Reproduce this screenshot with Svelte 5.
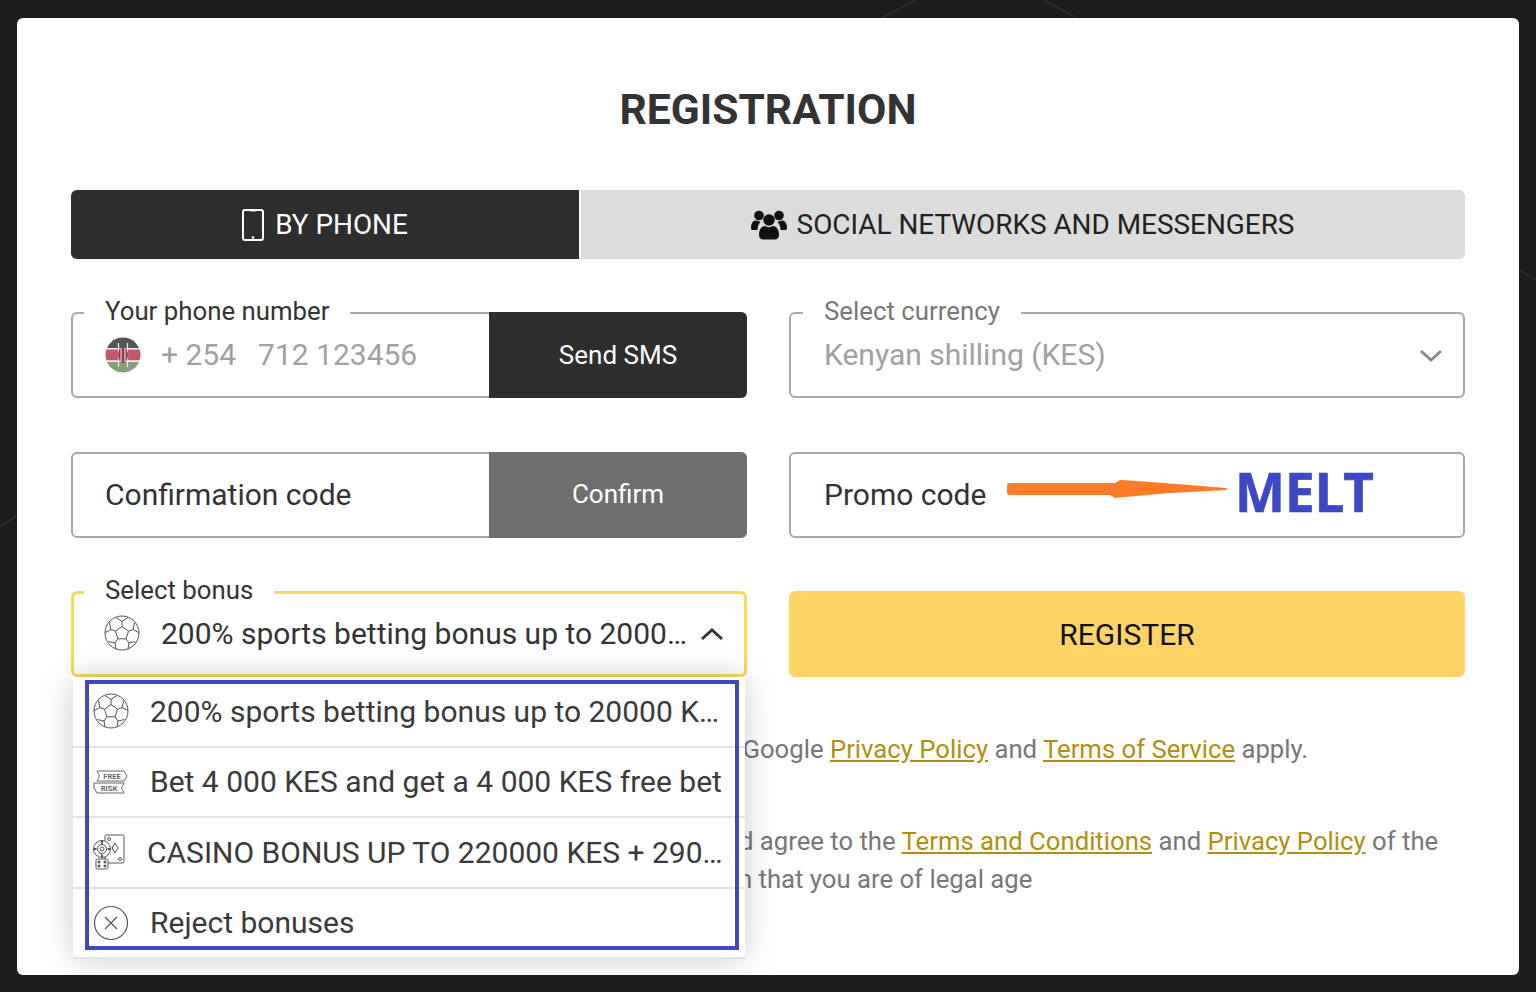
<script>
  const bonuses = [];
</script>

{#snippet ballIcon()}
  <svg class="ic" viewBox="0 0 36 36" fill="none" stroke="#555" stroke-width="1">
    <circle cx="18" cy="18" r="17"/>
    <path d="M18 11.5l6.5 4.7-2.5 7.6h-8l-2.5-7.6z"/>
    <path d="M18 11.5V6.5M24.5 16.2l4.6-1.6M22 23.8l3 4.2M14 23.800l-3 4.200M11.500 16.200l-4.600-1.600"/>
    <path d="M12 2.500l6 4 6-4M29.100 14.600l1.500-7M29.100 14.600l5.800 3M25 28l6.500-1.500M25 28l-1 6M11 28l-6.500-1.500M11 28l1 6M6.900 14.600l-1.500-7M6.900 14.600l-5.800 3"/>
  </svg>
{/snippet}

<div class="page">
  <svg class="bg" viewBox="0 0 1536 992" aria-hidden="true">
    <path d="M916 0L882 18M1043 0L1077 18M0 526L17 516M1519 270L1536 280" stroke="#2f2f2f" stroke-width="1.500" fill="none"/>
  </svg>
  <main class="card">
    <h1>REGISTRATION</h1>

    <div class="tabs">
      <div class="tab active">
        <svg width="22" height="32" viewBox="0 0 22 32" fill="none">
          <rect x="1" y="1" width="20" height="30" rx="2" stroke="#fff" stroke-width="2"/>
          <path d="M8 2.500h6" stroke="#888" stroke-width="1"/>
          <circle cx="11" cy="28.500" r="1.300" fill="#fff"/>
        </svg>
        <span>BY PHONE</span>
      </div>
      <div class="tab social">
        <svg width="36" height="30" viewBox="0 0 36 30" fill="#111">
          <circle cx="8" cy="5.500" r="4.800"/><circle cx="28" cy="5.500" r="4.800"/>
          <path d="M0 18c0-5 2-7.500 5-7.500 1.500 0 3 .5 4.500 1.500-2 2-3 4.500-3 8H2c-1.500 0-2-.5-2-2zM36 18c0-5-2-7.500-5-7.500-1.500 0-3 .5-4.500 1.500 2 2 3 4.500 3 8H34c1.500 0 2-.5 2-2z"/>
          <circle cx="18" cy="10" r="5.800"/>
          <path d="M8 25c0-6 3-9 6-9 2.500 1.500 5.500 1.500 8 0 3 0 6 3 6 9 0 3-2 4.500-4.500 4.500h-11C10 29.500 8 28 8 25z"/>
        </svg>
        <span>SOCIAL NETWORKS AND MESSENGERS</span>
      </div>
    </div>

    <div class="form">
      <div class="field">
        <span class="legend">Your phone number</span>
        <div class="value muted">
          <svg class="ic flag" viewBox="0 0 36 36">
            <defs><clipPath id="flag"><circle cx="18" cy="18" r="17.500"/></clipPath></defs>
            <g clip-path="url(#flag)">
              <rect width="36" height="11" fill="#555"/>
              <rect y="11" width="36" height="1.500" fill="#eee"/>
              <rect y="12.500" width="36" height="11" fill="#c4566c"/>
              <rect y="23.500" width="36" height="1.500" fill="#eee"/>
              <rect y="25" width="36" height="11" fill="#83a07a"/>
              <path d="M13.500 6v24M22.500 6v24" stroke="#eee" stroke-width="1.200"/>
              <ellipse cx="18" cy="18" rx="5" ry="8" fill="#9c3a4c"/>
              <path d="M16 11v14M20 11v14" stroke="#eee" stroke-width="1"/>
            </g>
          </svg>
          <span class="phone">+ 254</span><span>712 123456</span>
        </div>
        <button class="action dark">Send SMS</button>
      </div>

      <div class="field">
        <span class="legend muted-label">Select currency</span>
        <div class="value muted plain">Kenyan shilling (KES)</div>
        <svg class="chev" viewBox="0 0 24 14" fill="none" stroke="#888" stroke-width="3"><path d="M2 2l10 9 10-9"/></svg>
      </div>

      <div class="field">
        <div class="value plain dark-text code">Confirmation code</div>
        <button class="action gray">Confirm</button>
      </div>

      <div class="field promo">
        <div class="value plain dark-text">Promo code</div>
        <svg class="arrow" width="222" height="24" viewBox="0 0 222 24">
          <path d="M3 6h105l5-3 10 .5 40 3 56 4.500q2 1 0 2l-56 3-45 4-10 1-5-3H3a3 3 0 0 1-3-3V9a3 3 0 0 1 3-3z" fill="#fd7b27"/>
        </svg>
        <span class="melt">MELT</span>
      </div>

      <div class="field open">
        <span class="legend">Select bonus</span>
        <div class="value dark-text">
          {@render ballIcon()}
          <span class="truncate">200% sports betting bonus up to 20000 KES</span>
        </div>
        <svg class="chev up" viewBox="0 0 24 14" fill="none" stroke="#333" stroke-width="3"><path d="M2 12l10-9 10 9"/></svg>

        <div class="menu">
          <div class="row">
            {@render ballIcon()}
            <span class="truncate">200% sports betting bonus up to 20000 KES</span>
          </div>
          <div class="row">
            <svg class="ic" viewBox="0 0 36 36" fill="none" stroke="#666" stroke-width="1">
              <path d="M4 7h27l3 5-3 5H4l2.500-5zM1 19h30l-2.500 5 2.500 5H4l-3-5z"/>
              <text x="19" y="15" class="tiny">FREE</text>
              <text x="16" y="27" class="tiny">RISK</text>
            </svg>
            <span class="truncate">Bet 4 000 KES and get a 4 000 KES free bet</span>
          </div>
          <div class="row casino">
            <svg class="ic" viewBox="0 0 36 36" fill="none" stroke="#555" stroke-width="1">
              <rect x="12" y="1" width="19" height="28" rx="1.500"/>
              <path d="M22 9l3 5-3 5-3-5z"/>
              <circle cx="16" cy="5" r="1.500"/><circle cx="27" cy="25" r="1.500"/>
              <circle cx="9" cy="15" r="8.500" fill="#fff"/><circle cx="9" cy="15" r="4.500"/><circle cx="9" cy="15" r="2"/>
              <path d="M9 6.500v3M9 20.500v3M.5 15h3M14.500 15h3" stroke-width="2"/>
              <rect x="3" y="25" width="12" height="10" rx="1.500" fill="#fff"/>
              <circle cx="6" cy="28" r="1.100" fill="#555"/><circle cx="12" cy="28" r="1.100" fill="#555"/><circle cx="6" cy="32" r="1.100" fill="#555"/><circle cx="12" cy="32" r="1.100" fill="#555"/>
            </svg>
            <span class="truncate">CASINO BONUS UP TO 220000 KES + 290 FREE SPINS</span>
          </div>
          <div class="row">
            <svg class="ic" viewBox="0 0 36 36" fill="none" stroke="#555" stroke-width="1.200">
              <circle cx="18" cy="18" r="16.500"/><path d="M12 12l12 12M24 12L12 24"/>
            </svg>
            <span class="truncate">Reject bonuses</span>
          </div>
          <div class="highlight"></div>
        </div>
      </div>

      <button class="register">REGISTER</button>
    </div>

    <p class="legal first">This site is protected by reCAPTCHA and the Google <a href="#a">Privacy Policy</a> and <a href="#a">Terms of Service</a> apply.</p>
    <p class="legal second">By clicking the button, you confirm that you have read and agree to the <a href="#a">Terms and Conditions</a> and <a href="#a">Privacy Policy</a> of the<br/>company and confirm that you are of legal age</p>
  </main>
</div>

<style>
  :global(body) { margin: 0; background: #1c1c1c; }
  .page { position: relative; box-sizing: border-box; height: 992px; padding: 18px 17px 17px; overflow: hidden; font-family: Roboto, "Liberation Sans", sans-serif; }
  .bg { position: absolute; inset: 0; width: 100%; height: 100%; }
  .card { position: relative; box-sizing: border-box; height: 957px; background: #fff; border-radius: 6px; padding: 0 54px; color: #333; overflow: hidden; }
  h1 { margin: 0; padding-top: 65px; height: 107px; font-size: 42.6px; line-height: 52px; font-weight: 700; text-align: center; color: #333; }
  .tabs { display: flex; gap: 2px; height: 69px; }
  .tab { display: flex; align-items: center; justify-content: center; gap: 11px; font-size: 27.9px; background: #dcdcdc; color: #222; border-radius: 0 6px 6px 0; flex: 1; }
  .tab span { padding-bottom: 1px; }
  .social { gap: 10px; padding-right: 1px; }
  .tab.active { flex: 0 0 508px; background: #2e2e2e; color: #fff; border-radius: 6px 0 0 6px; }
  .form { display: grid; grid-template-columns: 676px 676px; column-gap: 42px; row-gap: 54px; margin-top: 53px; grid-template-rows: 86px 86px 86px; }
  .field { position: relative; display: flex; box-sizing: border-box; height: 86px; border: 2px solid #a8a8a8; border-radius: 6px; }
  .legend { position: absolute; left: 11px; top: -17px; padding: 0 21px; line-height: 28px; background: #fff; font-size: 25.8px; color: #333; }
  .muted-label { color: #777; left: 12px; }
  .value { display: flex; align-items: center; flex: 1; min-width: 0; box-sizing: border-box; padding: 0 20px 1px 32px; font-size: 30px; }
  .plain { padding-left: 33px; }
  .code { padding-left: 32px; }
  .muted { color: #a0a0a0; }
  .dark-text { color: #333; }
  .ic { flex: none; width: 36px; height: 36px; margin-right: 21px; }
  .flag { margin-right: 20px; filter: blur(.4px); }
  .phone { margin-right: 22px; }
  .truncate { overflow: hidden; white-space: nowrap; text-overflow: ellipsis; min-width: 0; }
  .action { flex: 0 0 258px; margin: -2px; border: 0; border-radius: 0 6px 6px 0; color: #fff; font: inherit; font-size: 26px; padding-bottom: 2px; }
  .dark { background: #2e2e2e; }
  .gray { background: #6f6f6f; padding-bottom: 4px; }
  .chev { position: absolute; right: 20px; top: 35px; width: 24px; height: 14px; }
  .chev.up { right: 20px; top: 33px; }
  .promo { align-items: center; }
  .promo .value { flex: none; }
  .arrow { position: absolute; left: 216px; top: 23px; }
  .melt { position: absolute; left: 444px; top: 6px; font-size: 53px; line-height: 64px; font-weight: 700; font-family: "Noto Sans", sans-serif; color: #3f48c4; -webkit-text-stroke: .6px #3f48c4; }
  .open { margin-top: -1px; border: 3px solid #f8d95c; border-radius: 6px; z-index: 2; }
  .open .legend { left: 10px; top: -18px; }
  .open .value { padding-left: 30px; padding-right: 56px; padding-bottom: 2px; }
  .menu { position: absolute; left: -1px; right: -1px; top: 83px; background: #fff; box-shadow: 0 0 34px rgba(0,0,0,.2); border-radius: 0 0 6px 6px; }
  .row { display: flex; align-items: center; box-sizing: border-box; height: 70.500px; padding: 0 20px 0 20px; font-size: 30px; color: #3a3a3a; border-bottom: 2px solid #e3e3e3; }
  .row:last-of-type { border-bottom: 0; }
  .row.casino .ic { margin-right: 18px; }
  .tiny { font: 700 7.500px Roboto, sans-serif; fill: #666; stroke: none; text-anchor: middle; }
  .highlight { position: absolute; left: 12px; top: 3px; width: 654px; height: 270px; box-sizing: border-box; border: 4px solid #3f48c0; pointer-events: none; }
  .register { margin-top: -1px; height: 86px; border: 0; border-radius: 6px; background: #ffd465; color: #111; font: inherit; font-size: 30px; }
  .legal { margin: 0; font-size: 25.7px; color: #777; text-align: center; line-height: 38px; }
  .legal a { color: #b08f10; }
  .first { margin-top: 52px; }
  .second { margin-top: 54px; }
</style>
